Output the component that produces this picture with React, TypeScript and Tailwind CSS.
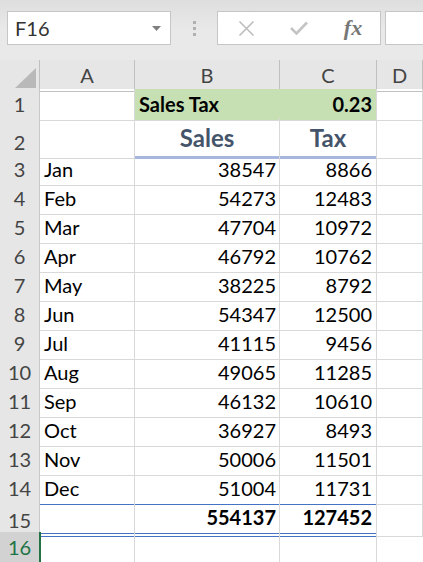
import React from "react";

const months = [
  ["Jan", 38547, 8866],
  ["Feb", 54273, 12483],
  ["Mar", 47704, 10972],
  ["Apr", 46792, 10762],
  ["May", 38225, 8792],
  ["Jun", 54347, 12500],
  ["Jul", 41115, 9456],
  ["Aug", 49065, 11285],
  ["Sep", 46132, 10610],
  ["Oct", 36927, 8493],
  ["Nov", 50006, 11501],
  ["Dec", 51004, 11731],
] as const;

const cell = "border-r border-b border-[#d9d9d9] flex items-end pb-[1px] overflow-hidden whitespace-nowrap";
const rowHead =
  "border-r border-b border-[#c8c8c8] bg-[#e6e6e6] flex items-end justify-center pb-[1px] text-[#444]";

function Toolbar() {
  return (
    <div className="h-[60px] bg-[#e8e8e8] bg-gradient-to-b from-[#dedede] via-[#e9e9e9] to-[#e9e9e9] flex items-start pt-[11px] pl-[7px]">
      {/* name box */}
      <div className="w-[164px] h-[34px] bg-white border border-[#c6c6c6] flex items-center pl-[7px] pr-[9px]">
        <span className="text-[20px] text-[#333] flex-1">F16</span>
        <svg width="9" height="5" viewBox="0 0 9 5">
          <path d="M0 0 L9 0 L4.5 5 Z" fill="#808080" />
        </svg>
      </div>
      {/* grip dots */}
      <div className="w-[46px] h-[34px] flex flex-col items-center justify-center gap-[3px]">
        <div className="w-[3px] h-[3px] bg-[#b0b0b0]" />
        <div className="w-[3px] h-[3px] bg-[#b0b0b0]" />
        <div className="w-[3px] h-[3px] bg-[#b0b0b0]" />
      </div>
      {/* formula buttons */}
      <div className="w-[164px] h-[34px] bg-white border border-[#c6c6c6] flex items-center">
        <div className="w-[54px] flex justify-center pl-[2px]">
          <svg width="17" height="17" viewBox="0 0 17 17">
            <path d="M1.5 1.5 L15.5 15.5 M15.5 1.5 L1.5 15.5" stroke="#bdbdbd" strokeWidth="1.6" />
          </svg>
        </div>
        <div className="w-[54px] flex justify-center">
          <svg width="18" height="14" viewBox="0 0 18 14">
            <path d="M1 7 L6.5 12.5 L17 1.5" stroke="#c4c4c4" strokeWidth="2.6" fill="none" />
          </svg>
        </div>
        <div className="w-[54px] flex justify-center">
          <span className="text-[22px] italic font-bold text-[#777] leading-none [font-family:'Liberation_Serif',serif]">
            fx
          </span>
        </div>
      </div>
      <div className="ml-[4px] flex-1 h-[34px] bg-white border-l border-t border-b border-[#c6c6c6]" />
    </div>
  );
}

export default function App() {
  const gridCols = "grid grid-cols-[40px_95px_145px_97px_1fr]";
  const heading =
    "border-r border-b-[3px] border-[#d9d9d9] border-b-[#a6b6dd] flex items-center justify-center pt-[2px] text-[24px] font-bold text-[#44546a]";
  const total =
    "border-r border-[#d9d9d9] border-b-[4px] border-double border-b-[#4472c4] flex items-end pb-[1px] justify-end font-bold";
  return (
    <div className="w-[423px] h-[562px] overflow-hidden bg-white text-[20px] text-black [font-family:Lato,'Liberation_Sans',sans-serif]">
      <Toolbar />

      {/* column headers */}
      <div className={`${gridCols} h-[29px] bg-[#e6e6e6]`}>
        <div className="border-r border-b border-[#c0c0c0] flex items-end justify-end pr-[3px] pb-[3px]">
          <svg width="21" height="20" viewBox="0 0 21 20">
            <path d="M21 0 L21 20 L0 20 Z" fill="#b9b9b9" />
          </svg>
        </div>
        {["A", "B", "C", "D"].map((c) => (
          <div
            key={c}
            className="border-r border-b border-[#c0c0c0] flex items-end justify-center pb-[1px] text-[#444]"
          >
            {c}
          </div>
        ))}
      </div>

      {/* row 1 */}
      <div className={`${gridCols} h-[29px]`}>
        <div className={rowHead}>1</div>
        <div className={cell} />
        <div className={`${cell} bg-[#c6e0b4] border-r-[#c6e0b4] font-bold pl-[4px]`}>Sales Tax</div>
        <div className={`${cell} bg-[#c6e0b4] font-bold justify-end pr-[4px]`}>0.23</div>
        <div className={cell} />
      </div>

      {/* row 2 */}
      <div className={`${gridCols} h-[36px]`}>
        <div className={rowHead}>2</div>
        <div className={cell} />
        <div className={heading}>Sales</div>
        <div className={heading}>Tax</div>
        <div className={cell} />
      </div>

      {/* data rows */}
      {months.map(([m, s, t], i) => {
        const last = i === months.length - 1;
        const b = last ? "border-b-[#4472c4]" : "";
        return (
          <div key={m} className={`${gridCols} h-[29px]`}>
            <div className={rowHead}>{i + 3}</div>
            <div className={`${cell} ${b} pl-[4px]`}>{m}</div>
            <div className={`${cell} ${b} justify-end pr-[3px]`}>{s}</div>
            <div className={`${cell} ${b} justify-end pr-[4px]`}>{t}</div>
            <div className={cell} />
          </div>
        );
      })}

      {/* totals row */}
      <div className={`${gridCols} h-[30px]`}>
        <div className={rowHead}>15</div>
        <div className={total} />
        <div className={`${total} pr-[3px]`}>554137</div>
        <div className={`${total} pr-[4px]`}>127452</div>
        <div className={cell} />
      </div>

      {/* row 16 (selected) */}
      <div className={`${gridCols} h-[30px]`}>
        <div className="border-r-2 border-[#217346] bg-[#d2d2d2] flex items-end justify-center pb-[1px] text-[#217346] w-[41px]">
          16
        </div>
        <div className="border-r border-[#d9d9d9]" />
        <div className="border-r border-[#d9d9d9]" />
        <div className="border-r border-[#d9d9d9]" />
        <div />
      </div>
    </div>
  );
}
